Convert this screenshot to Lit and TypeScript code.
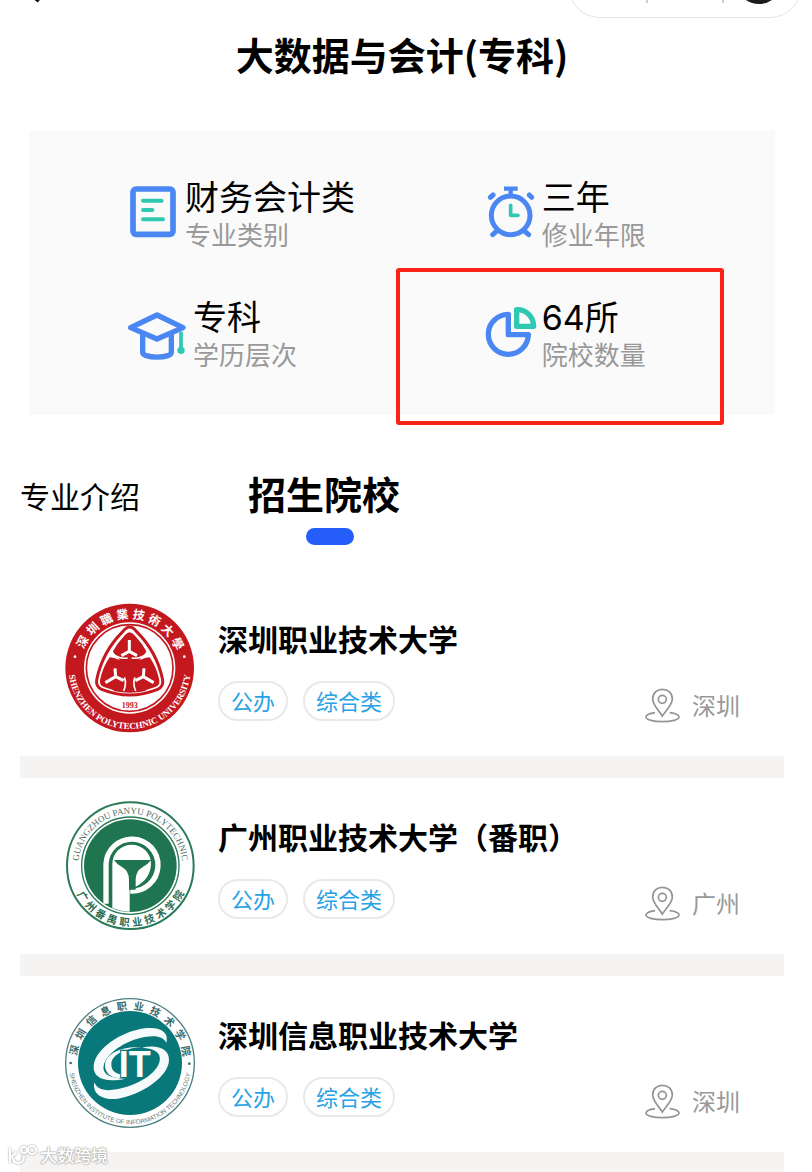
import { LitElement, html, svg, css } from "lit";
import { customElement, state } from "lit/decorators.js";

const BLUE = "#4a87f2";
const TEAL = "#2fc8b2";

/** Sets single characters evenly around a circle; bottom text faces the other way. */
const ringChars = (
  text: string, cx: number, cy: number, r: number,
  from: number, to: number, bottom = false,
) => {
  const chars = [...text];
  const step = (to - from) / (chars.length - 1);
  return chars.map((c, i) => {
    const a = from + step * i;
    return svg`<text x=${cx} y=${bottom ? cy + r : cy - r} text-anchor="middle"
      dominant-baseline="central" transform="rotate(${bottom ? -a : a} ${cx} ${cy})">${c}</text>`;
  });
};

const bookIcon = html`<svg width="56" height="76" viewBox="57 54 168 228" aria-hidden="true">
  <rect x="69" y="87" width="120" height="136" rx="9" fill="none" stroke=${BLUE} stroke-width="17"/>
  <path d="M99 122H155M99 150H127M99 178H159" stroke=${TEAL} stroke-width="12" stroke-linecap="round"/>
</svg>`;

const clockIcon = html`<svg width="56" height="76" viewBox="288 54 168 228" aria-hidden="true">
  <g fill="none" stroke=${BLUE} stroke-width="15">
    <circle cx="362" cy="166" r="58"/>
    <path d="M362 84V108M342 86H383" stroke-width="13"/>
    <path d="M301 112L309 105M418 105L425 112M308 224L322 212M416 224L402 212" stroke-linecap="round"/>
  </g>
  <path d="M362 136V166H384" fill="none" stroke=${TEAL} stroke-width="11" stroke-linecap="round" stroke-linejoin="round"/>
</svg>`;

const hatIcon = html`<svg width="64" height="76" viewBox="57 414 192 228" aria-hidden="true">
  <g fill="none" stroke=${BLUE} stroke-width="16" stroke-linejoin="round">
    <path d="M141 465L219 503L141 537L62 503Z"/>
    <path d="M98 522V577Q98 583 106 586Q141 597 176 586Q184 583 184 577V522"/>
  </g>
  <path d="M213 515V565" stroke=${TEAL} stroke-width="11"/><circle cx="213" cy="571" r="11" fill=${TEAL}/>
</svg>`;

const pieIcon = html`<svg width="56" height="76" viewBox="288 414 168 228" aria-hidden="true">
  <path d="M355 463A60 60 0 1 0 415 524H355Z" fill="none" stroke=${BLUE} stroke-width="16" stroke-linejoin="round"/>
  <path d="M380 449V499H431C430 469 408 448 380 449Z" fill="none" stroke=${TEAL} stroke-width="16" stroke-linejoin="round"/>
</svg>`;

const pinIcon = html`<svg width="35" height="36" viewBox="75 50 105 108" aria-hidden="true">
  <g fill="none" stroke="#949494" stroke-width="5">
    <path d="M127 137C120 125 98 104 98 86C98 68 111 57 127 57C144 57 157 68 157 86C157 104 134 125 127 137Z"/>
    <circle cx="127" cy="87" r="12"/>
    <path d="M105 127C90 129 78 134 78 140C78 148 100 154 127 154C155 154 177 148 177 140C177 134 165 129 149 127"/>
  </g>
</svg>`;

const szpuLogo = html`<svg class="logo" viewBox="30 36 390 390" role="img" aria-label="深圳职业技术大学">
  <defs><path id="arc-a" d="M41 234A183 183 0 0 0 407 234"/></defs>
  <circle cx="224" cy="234" r="193" fill="#c4181f"/>
  <circle cx="224" cy="234" r="137" fill="#fff"/>
  <circle cx="224" cy="234" r="130" fill="none" stroke="#c4181f" stroke-width="5"/>
  <g class="brush" fill="#fff">${ringChars("深圳職業技術大學", 224, 234, 165, -61, 63)}</g>
  <text class="serif" font-size="27" fill="#fff" text-anchor="middle"><textPath href="#arc-a" startOffset="50%">SHENZHEN POLYTECHNIC UNIVERSITY</textPath></text>
  <circle cx="60" cy="200" r="4" fill="#fff"/><circle cx="388" cy="200" r="4" fill="#fff"/>
  <path d="M204 124Q224 98 244 124Q306 185 323 270Q326 290 308 298Q224 332 140 298Q122 290 125 270Q142 185 204 124Z" fill="#fff" stroke="#c4181f" stroke-width="9"/>
  <g fill="#c4181f">
    <path d="M208 137Q224 116 240 137Q262 160 274 184A52 42 0 0 1 174 184Q186 160 208 137Z"/>
    <path d="M164 202Q206 204 210 250Q216 290 196 304Q170 300 147 291Q133 286 135 271Q142 234 164 202Z"/>
    <path d="M284 202Q242 204 238 250Q232 290 252 304Q278 300 301 291Q315 286 313 271Q306 234 284 202Z"/>
    <path d="M186 210Q224 196 262 210Q260 250 224 270Q188 250 186 210Z"/>
    <path d="M176 250H272V303Q224 314 176 303Z"/>
  </g>
  <path d="M206 303Q216 278 208 262M242 303Q232 278 240 262" fill="none" stroke="#fff" stroke-width="5"/>
  <path d="M172 190Q192 208 218 204M276 190Q256 208 230 204" fill="none" stroke="#fff" stroke-width="5"/>
  <g fill="none" stroke="#fff" stroke-width="9">
    <path d="M223 150V184L199 197M223 184L246 197"/>
    <path d="M151 278L182 260L180 235M182 260L206 272"/>
    <path d="M296 278L265 260L267 235M265 260L241 272"/>
  </g>
  <text class="serif" x="224" y="354" font-size="24" fill="#c4181f" text-anchor="middle">1993</text>
</svg>`;

const gzpLogo = html`<svg class="logo" viewBox="30 30 390 390" role="img" aria-label="广州番禺职业技术学院">
  <defs><path id="arc-b" d="M70 227A156 156 0 0 1 382 227"/></defs>
  <circle cx="226" cy="227" r="190" fill="#fff" stroke="#2a7a57" stroke-width="6"/>
  <circle cx="226" cy="227" r="146" fill="none" stroke="#2a7a57" stroke-width="4"/>
  <circle cx="226" cy="227" r="139" fill="#1f7550"/>
  <text class="thin-serif" font-size="27" fill="#4d6b5e" text-anchor="middle"><textPath href="#arc-b" startOffset="50%">GUANGZHOU PANYU POLYTECHNIC</textPath></text>
  <g class="ring" fill="#2c6d52">${ringChars("广州番禺职业技术学院", 226, 227, 168, -57, 58, true)}</g>
  <path d="M153 341V222A78 78 0 1 1 226 303" fill="none" stroke="#fff" stroke-width="16"/>
  <path d="M172 354V222A58 58 0 0 1 288 222Q286 268 242 290H224V365Q196 364 172 354Z" fill="#fff"/>
  <path d="M177 210H288Q278 224 262 232Q242 244 242 270V299H222V270Q222 244 202 232Q186 224 177 210Z" fill="#1f7550"/>
</svg>`;

const sziitLogo = html`<svg class="logo" viewBox="31 33 390 390" role="img" aria-label="深圳信息职业技术学院">
  <defs><path id="arc-c" d="M42 228A184 184 0 0 0 410 228"/></defs>
  <circle cx="226" cy="228" r="193" fill="#fff" stroke="#4c7f80" stroke-width="4"/>
  <circle cx="226" cy="228" r="156" fill="#08787a"/>
  <g class="brush small" fill="#3c6c6c">${ringChars("深圳信息职业技术学院", 226, 228, 174, -77, 78)}</g>
  <text class="sans" font-size="19" fill="#667b7b" text-anchor="middle"><textPath href="#arc-c" startOffset="50%">SHENZHEN INSTITUTE OF INFORMATION TECHNOLOGY</textPath></text>
  <circle cx="48" cy="228" r="4" fill="#3c6c6c"/><circle cx="404" cy="230" r="4" fill="#3c6c6c"/>
  <path d="M335 168C344 134 316 118 270 124C196 134 120 188 117 238C115 274 152 288 212 275C164 274 142 260 147 236C154 200 212 160 270 150C306 144 328 150 335 168Z" fill="#f6fafa"/>
  <path d="M119 286C112 320 142 342 190 335C262 324 342 268 343 220C344 186 310 172 262 182C302 184 320 198 315 222C306 262 246 296 186 307C148 314 126 306 119 286Z" fill="#f6fafa"/>
  <path d="M264 182C236 178 172 196 170 230C169 254 186 262 210 262L204 274C166 276 150 256 151 232C154 198 206 176 264 182Z" fill="#f6fafa"/>
  <text class="sans emblem" x="240" y="270" font-size="108" text-anchor="middle">IT</text>
</svg>`;

const stats = [
  { icon: bookIcon, value: "财务会计类", label: "专业类别" },
  { icon: clockIcon, value: "三年", label: "修业年限" },
  { icon: hatIcon, value: "专科", label: "学历层次" },
  { icon: pieIcon, value: "64所", label: "院校数量", marked: true },
];

const schools = [
  { logo: szpuLogo, name: "深圳职业技术大学", city: "深圳" },
  { logo: gzpLogo, name: "广州职业技术大学（番职）", city: "广州" },
  { logo: sziitLogo, name: "深圳信息职业技术大学", city: "深圳" },
];

@customElement("app-root")
export class AppRoot extends LitElement {
  @state() private tab = "招生院校";

  static styles = css`
    :host {
      display: block;
      position: relative;
      background: #fff;
      color: #000;
      font-family: "Noto Sans CJK SC", sans-serif;
    }
    h1, h2, p, ul { margin: 0; padding: 0; }
    button { border: 0; padding: 0; background: none; color: inherit; font-family: inherit; cursor: pointer; }
    svg { display: block; flex: none; overflow: visible; }
    .topbar {
      display: flex;
      justify-content: space-between;
      align-items: flex-end;
      height: 18px;
      padding: 0 10px 0 22px;
      overflow: hidden;
    }
    .back { height: 18px; }
    .capsule {
      box-sizing: border-box;
      flex: none;
      display: flex;
      width: 234px;
      height: 64px;
      border: 1px solid #e4e4e4;
      border-radius: 32px;
    }
    .page { padding-right: 8px; }
    h1 { margin-top: 8px; font-size: 38px; line-height: 56px; text-align: center; }
    .summary {
      display: grid;
      grid-template-columns: 5fr 4fr;
      row-gap: 44px;
      margin: 49px 29px 0;
      padding: 47px 4px 41px 100px;
      background: #fafafa;
    }
    .stat { position: relative; display: flex; }
    .value { font: 34px/40px Inter, "Noto Sans CJK SC", sans-serif; }
    .label { font-size: 26px; line-height: 32px; color: #999; }
    .marker {
      position: absolute;
      inset: -30px auto auto -90px;
      box-sizing: border-box;
      width: 328px;
      height: 157px;
      border: 4px solid #fb2317;
      border-radius: 3px;
      pointer-events: none;
    }
    .tabs { display: flex; align-items: flex-start; gap: 108px; margin: 53px 20px 0; }
    .tab { display: flex; flex-direction: column; font-size: 30px; line-height: 54px; }
    .tab.on { padding-right: 12px; font-size: 38px; font-weight: 700; line-height: 50px; }
    .tab.on::after {
      content: "";
      align-self: center;
      width: 48px;
      height: 17px;
      margin: 10px 0 0 12px;
      border-radius: 9px;
      background: #245dfa;
    }
    .schools { margin: 35px 20px 0; list-style: none; }
    .school {
      display: flex;
      align-items: flex-start;
      padding: 22px 44px 24px 45px;
      border-bottom: 22px solid #f5f4f2;
    }
    .school:last-child { border-bottom-width: 20px; }
    .logo { width: 130px; height: 130px; }
    .info { flex: 1; margin: 16px 0 0 23px; }
    h2 { font-size: 30px; line-height: 40px; white-space: nowrap; }
    .tags { display: flex; gap: 15px; margin-top: 23px; }
    .tag {
      box-sizing: border-box;
      height: 40px;
      padding: 0 11px;
      border: 2px solid #e9e9e9;
      border-radius: 20px;
      color: #27a2e6;
      font-size: 22px;
      line-height: 34px;
    }
    .city {
      display: flex;
      align-self: flex-end;
      gap: 12px;
      margin-bottom: 9px;
      color: #999;
      font-size: 24px;
      line-height: 36px;
    }
    .serif { font-family: "Liberation Serif", serif; font-weight: 700; }
    .thin-serif { font-family: "Liberation Serif", serif; }
    .sans { font-family: "Liberation Sans", sans-serif; }
    .brush { font-size: 36px; font-weight: 700; }
    .small { font-size: 31px; }
    .ring { font-size: 31px; font-weight: 700; }
    .emblem { font-weight: 700; fill: #fff; stroke: #08787a; stroke-width: 7px; paint-order: stroke; }
    .watermark {
      position: absolute;
      left: 8px;
      bottom: 6px;
      display: flex;
      align-items: center;
      gap: 2px;
      color: #fff;
      font-size: 17px;
      font-weight: 500;
      line-height: 22px;
      text-shadow: 0 0 2px #aaa, 0 0 2px #aaa, 0 0 1px #aaa;
    }
    .watermark svg { filter: drop-shadow(0 0 1px #999); }
  `;

  render() {
    return html`
      <header class="topbar">
        <button class="back" aria-label="返回">
          <svg width="20" height="18" viewBox="0 0 20 18"><path d="M-2 -14L17 1" stroke="#111" stroke-width="4"/></svg>
        </button>
        <div class="capsule">
          <button aria-label="更多"><svg width="80" height="62"><path d="M78 14V48" stroke="#ccc" stroke-width="2"/></svg></button>
          <button aria-label="最小化"><svg width="76" height="62"><path d="M74 14V48" stroke="#ccc" stroke-width="2"/></svg></button>
          <button aria-label="关闭"><svg width="76" height="62"><circle cx="34" cy="26" r="20" fill="none" stroke="#1c1c1c" stroke-width="6"/></svg></button>
        </div>
      </header>
      <main class="page">
        <h1>大数据与会计(专科)</h1>
        <section class="summary">
          ${stats.map((s) => html`
            <div class="stat">
              ${s.icon}
              <div><p class="value">${s.value}</p><p class="label">${s.label}</p></div>
              ${s.marked ? html`<span class="marker"></span>` : ""}
            </div>`)}
        </section>
        <nav class="tabs">
          ${["专业介绍", "招生院校"].map((t) => html`
            <button class="tab ${this.tab === t ? "on" : ""}" @click=${() => (this.tab = t)}>${t}</button>`)}
        </nav>
        <ul class="schools">
          ${schools.map((s) => html`
            <li class="school">
              ${s.logo}
              <div class="info">
                <h2>${s.name}</h2>
                <div class="tags"><span class="tag">公办</span><span class="tag">综合类</span></div>
              </div>
              <div class="city">${pinIcon}<span>${s.city}</span></div>
            </li>`)}
        </ul>
      </main>
      <div class="watermark">
        <svg width="30" height="22" viewBox="0 0 30 22" fill="none" stroke="#fff" stroke-width="2" stroke-linecap="round" aria-hidden="true">
          <path d="M2 5V18M2 12Q6 12 8 8M4 12Q5 19 10 19Q16 19 16 12"/>
          <circle cx="16" cy="6" r="3"/><circle cx="24" cy="6" r="4"/>
        </svg>
        <span>大数跨境</span>
      </div>
    `;
  }
}
